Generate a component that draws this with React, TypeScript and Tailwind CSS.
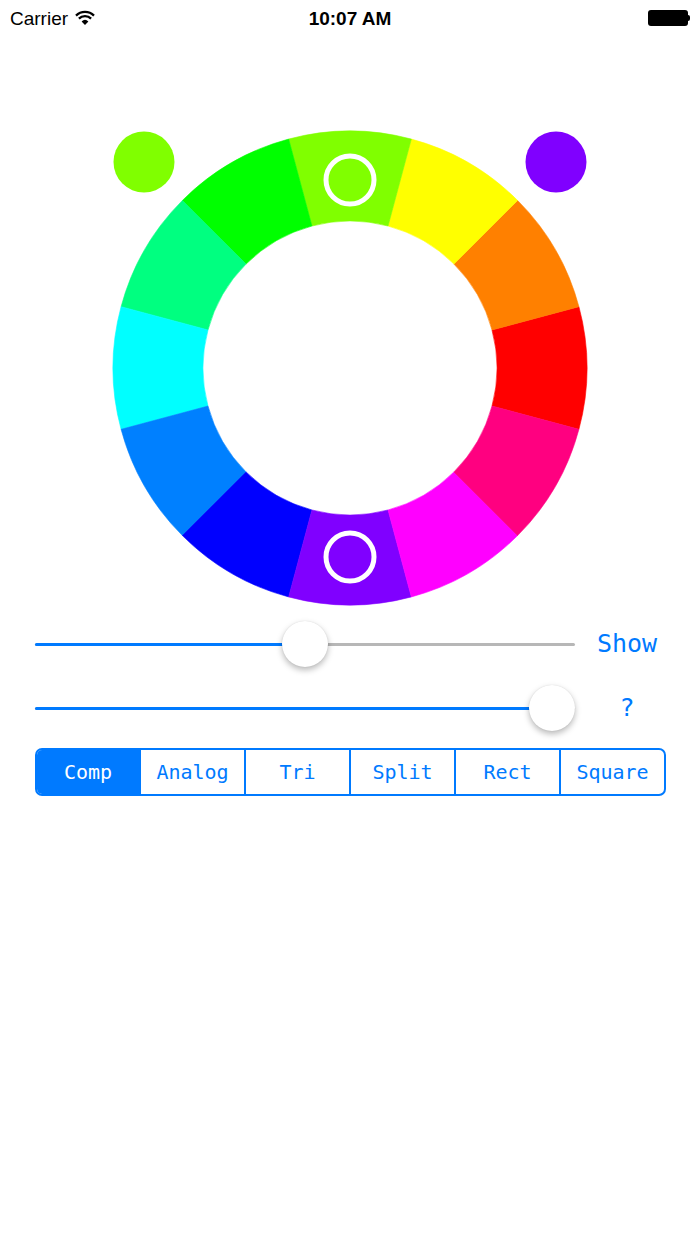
const BLUE = '#007aff';

const hues = Array.from({ length: 12 }, (_, i) => i * 30);

function hsl(h: number) {
  return `hsl(${h}, 100%, 50%)`;
}

function ColorWheel() {
  const cx = 250;
  const cy = 250;
  const ro = 237;
  const ri = 147;
  const pt = (r: number, deg: number) => {
    const a = (deg * Math.PI) / 180;
    return `${cx + r * Math.cos(a)} ${cy - r * Math.sin(a)}`;
  };
  const seg = (h: number) => {
    const a0 = h - 15;
    const a1 = h + 15;
    return `M ${pt(ro, a0)} A ${ro} ${ro} 0 0 0 ${pt(ro, a1)} L ${pt(ri, a1)} A ${ri} ${ri} 0 0 1 ${pt(ri, a0)} Z`;
  };
  return (
    <svg width="500" height="500" viewBox="0 0 500 500" className="block mx-auto">
      {hues.map((h) => (
        <path key={h} d={seg(h)} fill={hsl(h)} stroke={hsl(h)} strokeWidth="0.6" />
      ))}
      <circle cx={250} cy={62} r={24} fill="none" stroke="#fff" strokeWidth="5" />
      <circle cx={250} cy={439} r={24} fill="none" stroke="#fff" strokeWidth="5" />
      <circle cx={44} cy={44} r={30.5} fill="#80ff00" />
      <circle cx={456} cy={44} r={30.5} fill="#8000ff" />
    </svg>
  );
}

function Slider({ pct, label }: { pct: number; label: string }) {
  return (
    <div className="flex items-center h-[52px] pl-[35px]">
      <div className="relative w-[540px] h-[3px] rounded-full bg-[#b7b7b7]">
        <div className="absolute left-0 top-0 h-[3px] rounded-full bg-[#007aff]" style={{ width: `${pct}%` }} />
        <div
          className="absolute top-1/2 w-[46px] h-[46px] -translate-x-1/2 -translate-y-1/2 rounded-full bg-white shadow-[0_3px_6px_rgba(0,0,0,0.28),0_0_1px_rgba(0,0,0,0.15)]"
          style={{ left: `${pct}%` }}
        />
      </div>
      <div className="w-[104px] text-center text-[#007aff] text-[25px]" style={{ fontFamily: '"DejaVu Sans Mono", monospace' }}>
        {label}
      </div>
    </div>
  );
}

const modes = ['Comp', 'Analog', 'Tri', 'Split', 'Rect', 'Square'];

export default function App() {
  return (
    <div className="w-[700px] h-[1244px] bg-white relative overflow-hidden">
      {/* status bar */}
      <div className="relative h-[40px] flex items-center px-[10px] text-black" style={{ fontFamily: '"Liberation Sans", Arial, sans-serif' }}>
        <span className="text-[19px] leading-none -mt-[4px]">Carrier</span>
        <svg width="22" height="17" viewBox="0 0 22 17" className="ml-[6px] -mt-[6px]">
          <path d="M11 16 L7.6 12.4 A5 5 0 0 1 14.4 12.4 Z" fill="#000" />
          <path d="M4.9 9.6 A8.6 8.6 0 0 1 17.1 9.6" fill="none" stroke="#000" strokeWidth="2.3" />
          <path d="M2 6.6 A12.8 12.8 0 0 1 20 6.6" fill="none" stroke="#000" strokeWidth="2.3" />
        </svg>
        <span className="absolute left-0 right-0 text-center text-[19px] font-bold leading-none -mt-[4px]">10:07 AM</span>
        <div className="ml-auto flex items-center -mt-[4px]">
          <div className="w-[40px] h-[16px] rounded-[3px] bg-black" />
          <div className="w-[2px] h-[6px] bg-black rounded-r-sm" />
        </div>
      </div>

      <div className="mt-[78px]">
        <ColorWheel />
      </div>

      <Slider pct={50} label="Show" />
      <div className="mt-[12px]">
        <Slider pct={95.7} label="?" />
      </div>

      <div
        className="mt-[14px] ml-[35px] w-[631px] h-[48px] flex border-2 border-[#007aff] rounded-[7px] overflow-hidden text-[20px]"
        style={{ fontFamily: '"DejaVu Sans Mono", monospace', borderColor: BLUE }}
      >
        {modes.map((m, i) => (
          <div
            key={m}
            className={
              i === 0
                ? 'w-[102px] flex items-center justify-center bg-[#007aff] text-white'
                : 'flex-1 flex items-center justify-center border-l-2 border-[#007aff] text-[#007aff]'
            }
          >
            {m}
          </div>
        ))}
      </div>
    </div>
  );
}
